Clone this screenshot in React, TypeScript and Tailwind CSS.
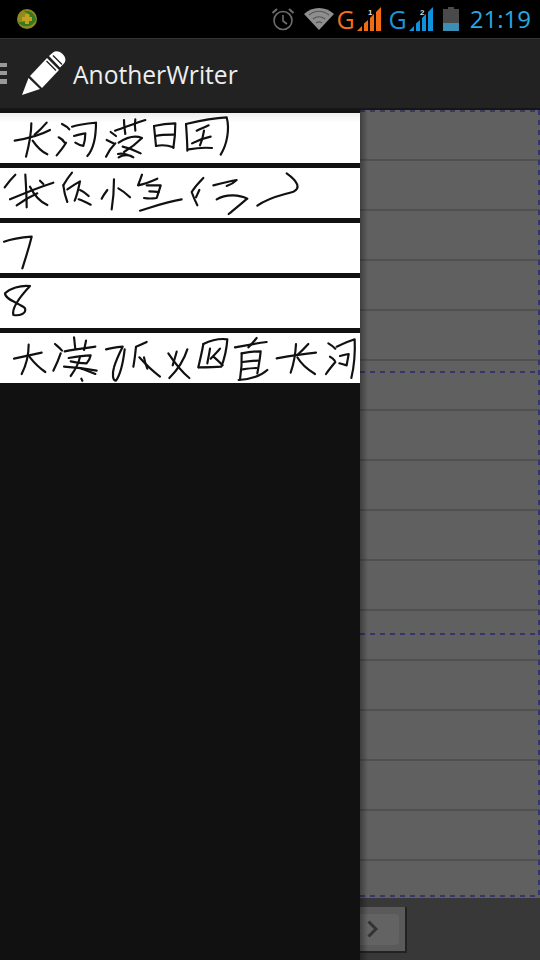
const lineRows = Array.from({ length: 15 }, (_, i) => i);

// handwriting: ink strokes saved by the app, coordinates are 3x screen pixels
const notes = [
  {
    box: "0 9 1080 150",
    ink: [
      "M44 92C80 86 120 76 150 60", "M94 40C94 80 86 110 78 140", "M140 38C128 52 116 64 104 74", "M98 92C110 110 125 125 142 133",
      "M186 42C194 46 202 50 208 58", "M176 82C184 86 190 90 194 98", "M170 136C180 124 190 112 198 98", "M216 50C240 42 265 40 288 38C288 80 282 115 262 138", "M222 78C234 74 246 72 256 70C256 84 254 96 250 108C240 106 232 102 226 98",
      "M345 62C375 52 405 40 436 30", "M372 30C372 44 374 58 376 72", "M406 28C404 40 404 50 406 62", "M332 66L348 78", "M320 90L340 100", "M318 140C326 124 336 110 346 100", "M356 98C380 82 402 74 426 84C410 100 392 114 372 126", "M368 110C386 114 404 120 422 130", "M354 132C370 128 384 134 400 142C392 134 370 132 356 142",
      "M462 48C464 68 466 88 468 108", "M462 48C485 42 505 40 526 40C526 66 524 90 520 114", "M466 78C484 74 502 74 520 74", "M468 108C486 104 504 106 520 112",
      "M558 42C560 70 562 96 562 122", "M558 42C600 32 640 24 680 22C690 60 680 105 662 134", "M590 62C602 56 614 52 626 46", "M576 100C594 90 612 84 632 80", "M612 62C610 76 606 92 600 106", "M566 118C588 114 612 112 636 114",
    ],
  },
  {
    box: "0 174 1080 150",
    ink: [
      "M14 232C24 218 34 206 46 194", "M30 268C72 250 116 232 160 218", "M76 194C78 226 80 258 80 292", "M90 230C105 260 120 275 142 285", "M50 286C70 272 90 260 112 250", "M120 212L130 222",
      "M190 226C198 212 206 200 216 188", "M190 226C192 244 196 260 202 276", "M202 238C214 230 226 222 240 214C236 234 232 254 224 272", "M240 240C250 244 258 250 266 258", "M236 268C248 272 260 278 272 284",
      "M342 208C342 238 340 268 335 298", "M305 266C310 256 316 248 322 240", "M355 235C368 242 380 252 390 262",
      "M426 194C422 206 418 216 414 226C434 222 454 214 472 206", "M440 226C454 226 468 226 482 226C478 240 474 252 470 264C456 266 444 266 432 264", "M448 244C458 244 468 246 476 246", "M420 302C460 290 500 275 545 268",
      "M610 204C596 218 584 232 575 246C580 260 586 274 592 286", "M598 240L588 262", "M640 226C664 220 688 214 710 210C702 218 692 224 680 228", "M650 268C680 250 720 255 742 266C722 282 704 298 686 312",
      "M772 287C810 260 850 255 880 245C902 235 895 215 860 190",
    ],
  },
  {
    box: "0 339 1080 150",
    ink: ["M12 395C40 385 70 382 95 380C85 420 75 450 67 475"],
  },
  {
    box: "0 84 1080 150",
    ink: ["M90 108C60 105 30 115 15 130C15 150 60 160 75 175C80 190 60 198 40 195C35 175 60 140 90 108"],
  },
  {
    box: "0 249 1080 150",
    ink: [
      "M42 326C70 320 98 314 125 308", "M86 284C86 320 76 350 65 372", "M88 320C102 338 118 354 136 366",
      "M165 282C172 288 180 294 186 302", "M182 310C176 328 168 346 160 362", "M194 304C224 298 256 294 286 290", "M222 262C224 274 224 286 226 296", "M258 272C256 282 254 292 252 300", "M206 324C228 320 250 316 272 316C270 326 266 334 260 340C244 340 228 338 212 334", "M192 350C224 352 258 356 290 362", "M240 320C236 342 224 362 212 378", "M244 356C258 360 272 366 286 372", "M244 386L247 392",
      "M318 298C334 294 350 292 368 290C358 310 348 330 342 352C336 372 338 392 348 392C362 372 370 332 374 298", "M440 276C428 282 418 286 408 290C406 310 404 330 400 350", "M418 322C436 342 456 362 480 380", "M432 322C434 334 438 346 442 356",
      "M530 305C526 320 522 332 518 346", "M562 298C552 330 532 360 508 384", "M505 310C525 340 545 365 568 384",
      "M610 282C606 306 600 330 595 352", "M610 282C635 270 660 265 682 268C680 296 674 324 664 350C642 352 618 352 596 352", "M630 296C628 312 624 326 622 340", "M632 326C642 316 652 306 660 296", "M640 320C650 328 660 338 668 346",
      "M705 292C736 286 768 280 800 276", "M770 264C762 274 754 284 745 292", "M725 310C726 336 724 362 720 388", "M725 310C744 306 762 304 782 304C780 326 776 348 772 370", "M728 336C742 334 758 332 774 332", "M728 358C742 356 756 354 770 354", "M716 390C750 388 780 380 802 360",
      "M830 325C870 318 908 312 948 308", "M888 282C886 320 880 345 872 368", "M925 282C914 294 902 306 892 315", "M892 322C905 345 925 360 945 372",
      "M985 280C992 284 1000 290 1006 296", "M990 320C994 322 1000 326 1004 332", "M978 372C986 360 996 348 1006 336", "M1010 290C1028 282 1046 274 1064 268C1066 310 1062 350 1054 384", "M1020 318C1028 316 1036 314 1046 312C1044 324 1042 334 1040 346C1032 344 1024 342 1018 340",
    ],
  },
];

function Pencil() {
  return (
    <svg width="44" height="46" viewBox="0 0 44 46" className="ml-[15px] shrink-0">
      <path d="M0 44L6.500 27L18 38Z" fill="#fff" />
      <path d="M8 25L25 7L37 19L20 37Z" fill="#fff" />
      <path d="M27 5L31 1.500C33.500 -0.500 37 0 40 2.500L41.500 4C44 7 44 10.500 41.500 13L38 16.500Z" fill="#fff" />
      <path d="M24.500 10L34 19.500M27.500 7.500L37 17M31 4.500L40 13.500" stroke="#222" strokeWidth="1.400" />
    </svg>
  );
}

function Signal({ color, num }: { color: string; num: string }) {
  return (
    <svg width="24" height="24" viewBox="0 0 24 24" className="shrink-0">
      <path d="M0 24L5 19V24Z" fill={color} />
      <path d="M7 24V16.500L11 13V24Z" fill={color} />
      <path d="M13 24V11L17 7V24Z" fill={color} />
      <path d="M19 24V5L24 0V24Z" fill={color} />
      <text x="11" y="8" fontSize="8" fill="#ddd" fontFamily="Liberation Sans, sans-serif" fontWeight="700">{num}</text>
    </svg>
  );
}

export default function App() {
  return (
    <div className="flex h-[960px] w-[540px] flex-col overflow-hidden bg-[#111] font-['Open_Sans',sans-serif]">
      {/* status bar */}
      <div className="flex h-[38px] shrink-0 items-center bg-black">
        <svg width="22" height="22" viewBox="0 0 22 22" className="ml-4 shrink-0">
          <circle cx="11" cy="11" r="10" fill="#8f8a1e" />
          <path d="M2 14C6 20 16 20 20 12C19 6 14 2 8 3L14 7C16 11 10 15 2 14Z" fill="#2f7a22" />
          <path d="M9 6H13V9H16V13H13V16H9V13H6V9H9Z" fill="#c8a020" />
        </svg>
        <div className="ml-auto flex items-center">
          <svg width="24" height="24" viewBox="0 0 24 24" fill="none" stroke="#6e6e6e" strokeWidth="1.600" className="shrink-0">
            <circle cx="12" cy="13.500" r="9" />
            <path d="M12 8V14L16 17" />
            <path d="M1.500 6L6 2M22.500 6L18 2" strokeWidth="2" />
          </svg>
          <svg width="30" height="24" viewBox="0 0 30 24" className="ml-[9px] shrink-0">
            <path d="M0 7C8 -1 22 -1 30 7L15 23Z" fill="#8e8e8e" />
            <path d="M5 8C11 3 19 3 25 8M9 12C13 9 17 9 21 12M12 16C14 14.500 16 14.500 18 16" stroke="#555" strokeWidth="1.200" fill="none" />
          </svg>
          <span className="ml-[2px] text-[25px] leading-none text-[#f26f1c]">G</span>
          <div className="ml-[2px]"><Signal color="#f26a12" num="1" /></div>
          <span className="ml-[8px] text-[25px] leading-none text-[#1d94d8]">G</span>
          <div className="ml-[2px]"><Signal color="#1190dc" num="2" /></div>
          <svg width="16" height="24" viewBox="0 0 16 24" className="ml-[10px] shrink-0">
            <path d="M5 0H11V2H16V24H0V2H5Z" fill="#4a4a4a" />
            <rect y="16" width="16" height="8" fill="#3b8fb5" />
          </svg>
          <span className="ml-[11px] mr-[9px] text-[24px] leading-none text-[#29a9e0]">21:19</span>
        </div>
      </div>

      {/* action bar */}
      <div className="flex h-[72px] shrink-0 items-center border-t border-[#333] border-b-2 border-b-[#161616] bg-[#222]">
        <div className="flex w-[7px] shrink-0 flex-col gap-1">
          <div className="h-1 bg-[#999]" />
          <div className="h-1 bg-[#999]" />
          <div className="h-[5px] bg-[#999]" />
        </div>
        <Pencil />
        <span className="ml-[7px] pt-[3px] text-[24.6px] leading-none text-[#eee]">AnotherWriter</span>
      </div>

      <div className="flex min-h-0 flex-1">
        {/* saved notes */}
        <div className="flex w-[360px] shrink-0 flex-col gap-[5px] pt-[3px]">
          {notes.map((note, i) => (
            <div key={note.box} className={i === 0 ? "h-[50px] bg-[linear-gradient(#eeeeee,#ffffff_10px)]" : "h-[50px] bg-white"}>
              <svg width="360" height="50" viewBox={note.box} fill="none" stroke="#111" strokeWidth="6.500" strokeLinecap="round" strokeLinejoin="round">
                {note.ink.map((d) => (
                  <path key={d} d={d} />
                ))}
              </svg>
            </div>
          ))}
        </div>

        {/* writing page */}
        <div className="relative flex min-w-0 flex-1 flex-col bg-[#383838]">
          <div className="h-[788px] shrink-0 overflow-hidden bg-[#606060]">
            {lineRows.map((i) => (
              <div key={i} className={`border-b-2 border-[#505050] ${i === 0 ? "h-[51px]" : "h-[50px]"}`} />
            ))}
          </div>
          <div className="pt-[9px]">
            <div className="flex h-[46px] w-[47px] items-center border-r-2 border-b-2 border-[#222] bg-[#5a5a5a]">
              <div className="flex h-[31px] w-[39px] items-center rounded-r bg-[#636363] pl-[7px]">
                <svg width="11" height="18" viewBox="0 0 11 18" fill="none" stroke="#333" strokeWidth="3">
                  <path d="M1.500 1.500L9 9L1.500 16.500" />
                </svg>
              </div>
            </div>
          </div>
          {/* page guides */}
          <div className="absolute inset-x-0 top-0 h-[2px] bg-[repeating-linear-gradient(90deg,#3a3a5c_0,#3a3a5c_5px,transparent_5px,transparent_10px)]" />
          <div className="absolute inset-x-0 top-[261px] h-[2px] bg-[repeating-linear-gradient(90deg,#35356b_0,#35356b_5px,transparent_5px,transparent_10px)]" />
          <div className="absolute inset-x-0 top-[523px] h-[2px] bg-[repeating-linear-gradient(90deg,#35356b_0,#35356b_5px,transparent_5px,transparent_10px)]" />
          <div className="absolute inset-x-0 top-[785px] h-[2px] bg-[repeating-linear-gradient(90deg,#35356b_0,#35356b_5px,transparent_5px,transparent_10px)]" />
          <div className="absolute right-0 top-0 h-[787px] w-[2px] bg-[repeating-linear-gradient(180deg,#35356b_0,#35356b_5px,transparent_5px,transparent_10px)]" />
          {/* drawer shadow */}
          <div className="absolute inset-y-0 left-0 w-[8px] bg-gradient-to-r from-black/35 to-transparent" />
        </div>
      </div>
    </div>
  );
}
